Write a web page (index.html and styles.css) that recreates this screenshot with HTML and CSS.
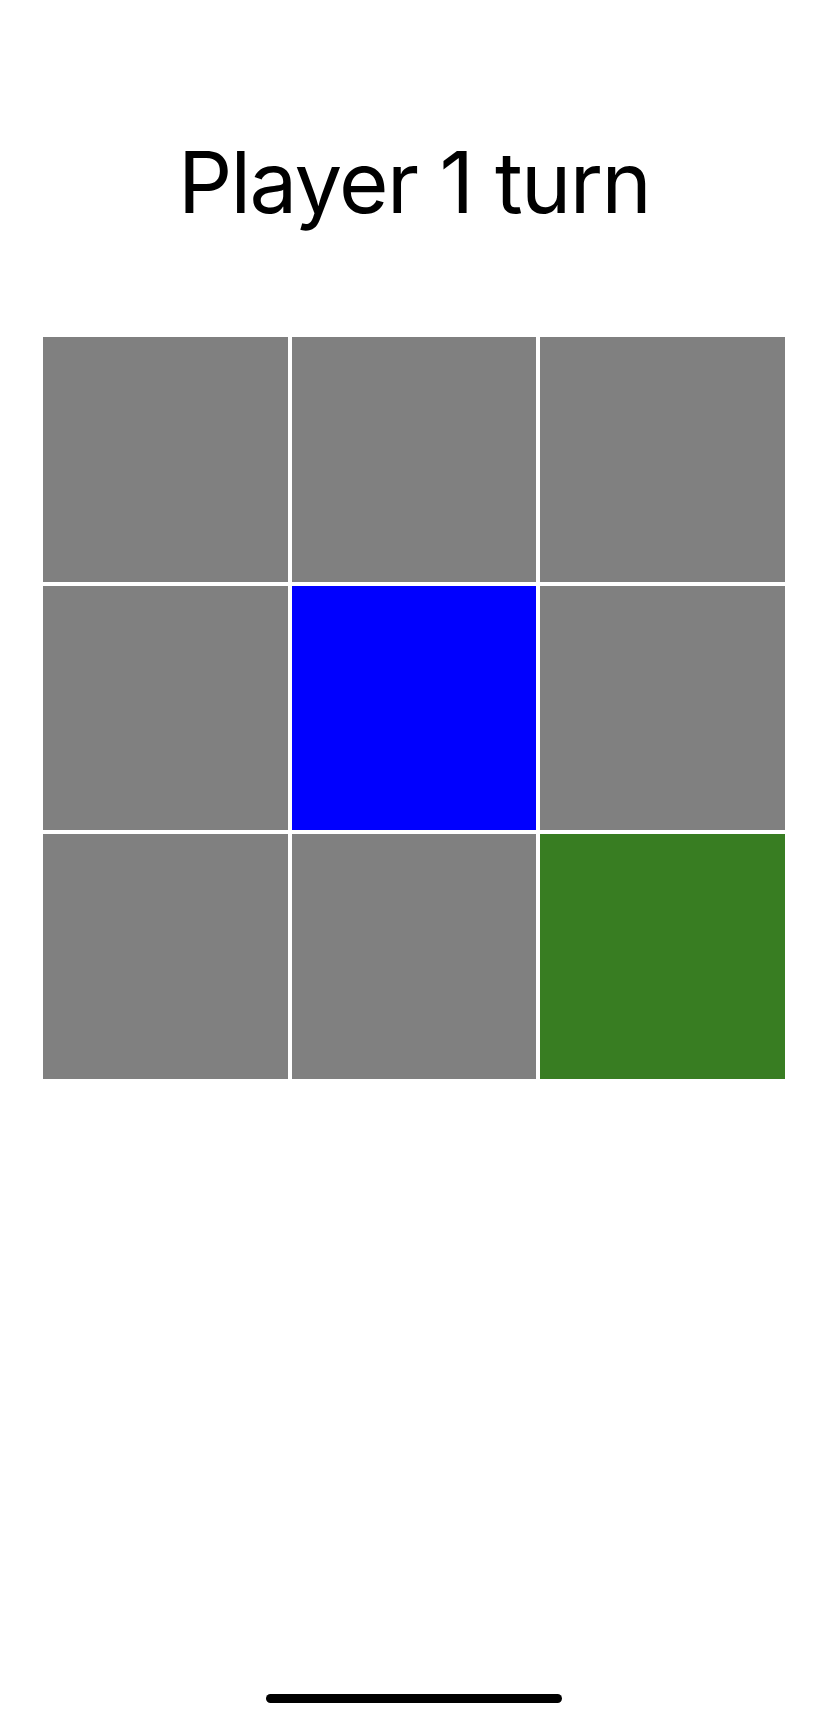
FILE: index.html
```html
<!DOCTYPE html>
<html lang="en">
<head>
  <meta charset="UTF-8" />
  <meta name="viewport" content="width=device-width, initial-scale=1.0"/>
  <title>Tic Tac Toe</title>
  <link rel="stylesheet" href="styles.css">
</head>
<body>

<h1 id="status">Player 1 turn</h1>

<div id="board">
  <div class="cell"></div>
  <div class="cell"></div>
  <div class="cell"></div>
  <div class="cell"></div>
  <div class="cell p1"></div>
  <div class="cell"></div>
  <div class="cell"></div>
  <div class="cell"></div>
  <div class="cell p2"></div>
</div>

<div class="home-bar"></div>

</body>
</html>
```

FILE: styles.css
```css
body {
  margin: 0;
  font-family: Inter, 'Liberation Sans', Arial, sans-serif;
  background: #fff;
  color: #000;
}

h1 {
  margin: 0;
  padding-top: 140px;
  font-size: 85px;
  font-weight: normal;
  line-height: 86px;
  letter-spacing: -1.6px;
  text-align: center;
}

#board {
  display: grid;
  grid-template-columns: 245px 244px 245px;
  grid-template-rows: 245px 244px 245px;
  gap: 4px;
  width: 742px;
  margin: 111px auto 0;
}

.cell {
  background: #808080;
}

.cell.p1 {
  background: #0000ff;
}

.cell.p2 {
  background: #387d22;
}

.home-bar {
  position: fixed;
  left: 50%;
  bottom: 17px;
  width: 296px;
  height: 9px;
  margin-left: -148px;
  border-radius: 5px;
  background: #000;
}
```
